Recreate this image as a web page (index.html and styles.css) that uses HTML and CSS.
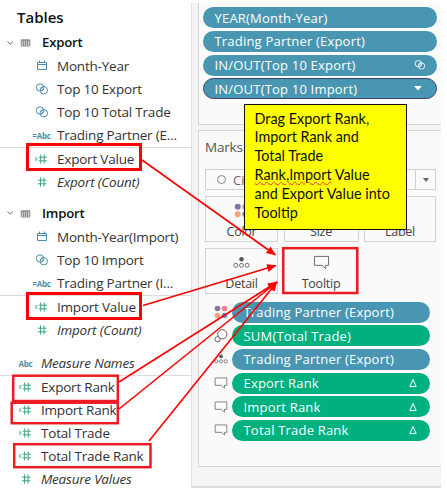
FILE: index.html
```html
<!DOCTYPE html>
<html lang="en">
<head>
<meta charset="utf-8">
<title>Tooltip fields</title>
<link rel="stylesheet" href="styles.css">
</head>
<body>
<svg class="defs" width="0" height="0">
  <symbol id="table" viewBox="0 0 14 14"><path d="M1.5 3.5h11v8h-11zM1.500 6.500h11M1.500 9h11M4.500 5v6.500M7 5v6.500M9.500 5v6.500"/><path d="M1.500 4.500h11"/></symbol>
  <symbol id="chev" viewBox="0 0 8 8"><path d="M1.5 2.5l2.7 2.7 2.7-2.7"/></symbol>
  <symbol id="cal" viewBox="0 0 14 14"><path d="M2.5 3.5h9v7h-9zM2.5 5.5h9M4.5 1.5v2M9.5 1.5v2"/></symbol>
  <symbol id="set" viewBox="0 0 14 14"><circle cx="5" cy="5.5" r="3.7"/><circle cx="8.8" cy="8.2" r="3.7"/><path d="M5.5 7l3-3M6.5 9l2.5-3"/></symbol>
  <symbol id="hash" viewBox="0 0 14 14"><path d="M5.5 2.5v9M9 2.5v9M3 5.2h8.5M3 8.8h8.5"/></symbol>
  <symbol id="ehash" viewBox="0 0 14 14"><path d="M5.7 2.5v9M9.2 2.5v9M3.8 5.2h8.2M3.8 8.8h8.2M0 6h2.3M0 8h2.3"/></symbol>
  <symbol id="dots" viewBox="0 0 14 14"><g stroke="none"><circle cx="3.5" cy="3.5" r="2.8" fill="#8674a2"/><circle cx="10.5" cy="3.5" r="2.8" fill="#f47c86"/><circle cx="3.5" cy="10.5" r="2.8" fill="#f2a477"/><circle cx="10.5" cy="10.5" r="2.8" fill="#5c93c4"/></g></symbol>
  <symbol id="detail" viewBox="0 0 18 14"><circle cx="9" cy="3.5" r="2.4" fill="#555" stroke="none"/><circle cx="3" cy="10" r="2.1"/><circle cx="9" cy="10" r="2.1"/><circle cx="15" cy="10" r="2.1"/></symbol>
  <symbol id="size" viewBox="0 0 14 14"><circle cx="8.3" cy="5.3" r="4.6"/><circle cx="3.5" cy="10.3" r="2.6" fill="#fafafa"/></symbol>
  <symbol id="tip" viewBox="0 0 18 16"><path d="M1.500 1.5h15v9.500h-3v3.5l-4-3.500h-8z"/></symbol>
  <symbol id="delta" viewBox="0 0 10 10"><path d="M5 1.5L8.2 8.6H1.8z"/></symbol>
</svg>

<main class="app">
  <section class="data">
    <h1>Tables</h1>
    <div class="row group"><svg class="chev"><use href="#chev"/></svg><svg class="tbl"><use href="#table"/></svg><b>Export</b></div>
    <div class="row child"><i class="ic dim"><svg><use href="#cal"/></svg></i><span>Month-Year</span></div>
    <div class="row child"><i class="ic dim"><svg><use href="#set"/></svg></i><span>Top 10 Export</span></div>
    <div class="row child"><i class="ic dim"><svg><use href="#set"/></svg></i><span>Top 10 Total Trade</span></div>
    <div class="row child last"><i class="ic abc">=Abc</i><span>Trading Partner (E...</span></div>
    <div class="row child"><i class="ic mea"><svg><use href="#ehash"/></svg></i><span>Export Value</span></div>
    <div class="row child"><i class="ic mea"><svg><use href="#hash"/></svg></i><em>Export (Count)</em></div>
    <div class="row group second"><svg class="chev"><use href="#chev"/></svg><svg class="tbl"><use href="#table"/></svg><b>Import</b></div>
    <div class="row child"><i class="ic dim"><svg><use href="#cal"/></svg></i><span>Month-Year(Import)</span></div>
    <div class="row child"><i class="ic dim"><svg><use href="#set"/></svg></i><span>Top 10 Import</span></div>
    <div class="row child last"><i class="ic abc">=Abc</i><span>Trading Partner (I...</span></div>
    <div class="row child"><i class="ic mea"><svg><use href="#ehash"/></svg></i><span>Import Value</span></div>
    <div class="row child"><i class="ic mea"><svg><use href="#hash"/></svg></i><em>Import (Count)</em></div>
    <div class="row root names last"><i class="ic abc">Abc</i><em>Measure Names</em></div>
    <div class="row root"><i class="ic mea"><svg><use href="#ehash"/></svg></i><span>Export Rank</span></div>
    <div class="row root"><i class="ic mea"><svg><use href="#ehash"/></svg></i><span>Import Rank</span></div>
    <div class="row root"><i class="ic mea"><svg><use href="#ehash"/></svg></i><span>Total Trade</span></div>
    <div class="row root"><i class="ic mea"><svg><use href="#ehash"/></svg></i><span>Total Trade Rank</span></div>
    <div class="row root"><i class="ic mea"><svg><use href="#hash"/></svg></i><em>Measure Values</em></div>
  </section>

  <section class="shelves">
    <div class="card filters">
      <div class="pill">YEAR(Month-Year)</div>
      <div class="pill">Trading Partner (Export)</div>
      <div class="pill">IN/OUT(Top 10 Export)<svg class="pset"><use href="#set"/></svg></div>
      <div class="pill active">IN/OUT(Top 10 Import)<svg class="caret" viewBox="0 0 8 5"><path d="M0 0h8L4 4.5z"/></svg></div>
    </div>
    <div class="card marks">
      <h2>Marks</h2>
      <div class="select"><span class="circle"></span><span class="kind">Ci</span><span class="arrow"><svg viewBox="0 0 6 4"><path d="M0 0h6L3 4z"/></svg></span></div>
      <div class="buttons">
        <div class="btn"><svg class="bi"><use href="#dots"/></svg><span>Color</span></div>
        <div class="btn"><svg class="bi"><use href="#size"/></svg><span>Size</span></div>
        <div class="btn"><svg class="bi"></svg><span>Label</span></div>
        <div class="btn"><svg class="bi"><use href="#detail"/></svg><span>Detail</span></div>
        <div class="btn"><svg class="bi"><use href="#tip"/></svg><span>Tooltip</span></div>
      </div>
      <div class="enc">
        <div class="line"><svg><use href="#dots"/></svg><div class="pill">Trading Partner (Export)</div></div>
        <div class="line"><svg><use href="#size"/></svg><div class="pill green">SUM(Total Trade)</div></div>
        <div class="line"><svg><use href="#detail"/></svg><div class="pill">Trading Partner (Export)</div></div>
        <div class="line"><svg><use href="#tip"/></svg><div class="pill green">Export Rank<svg class="delta"><use href="#delta"/></svg></div></div>
        <div class="line"><svg><use href="#tip"/></svg><div class="pill green">Import Rank<svg class="delta"><use href="#delta"/></svg></div></div>
        <div class="line"><svg><use href="#tip"/></svg><div class="pill green">Total Trade Rank<svg class="delta"><use href="#delta"/></svg></div></div>
      </div>
    </div>
  </section>

  <div class="note">Drag Export Rank,<br>Import Rank and<br>Total Trade<br><u>Rank,Import</u> Value<br>and Export Value into<br>Tooltip</div>

  <svg class="marksup" viewBox="0 0 447 496">
    <defs><marker id="head" markerUnits="userSpaceOnUse" markerWidth="10" markerHeight="10" refX="9" refY="4" orient="auto"><path d="M0 0L9.5 4L0 8z" fill="#f00" stroke="none"/></marker></defs>
    <g class="bold"><rect x="27.5" y="144.5" width="113" height="25"/><rect x="27.5" y="293.5" width="113" height="25"/></g>
    <g class="thin"><rect x="13.2" y="375.7" width="104.6" height="25.3"/><rect x="11.7" y="402.7" width="106.1" height="20.5"/><rect x="14.2" y="444.2" width="136.3" height="23"/><rect x="283.2" y="248.2" width="74" height="44.8"/></g>
    <g class="arrows"><path d="M142 160L275.500 255"/><path d="M143 305.500L276 265.500"/><path d="M119 382L277 282"/><path d="M119 409L277 282"/><path d="M149 441L277 282"/></g>
  </svg>
</main>
</body>
</html>
```
FILE: styles.css
```css
* { box-sizing: border-box; }
body { margin: 0; background: #fff; font-family: "Open Sans", "Noto Sans", sans-serif; color: #333; }
.defs { position: absolute; }
svg { fill: none; stroke: currentColor; stroke-width: 1; flex: none; }
.app { position: relative; display: flex; width: 447px; height: 496px; overflow: hidden; }

.data { width: 191px; padding-top: 6px; white-space: nowrap; font-size: 13.5px; letter-spacing: -0.21px; }
h1 { margin: 0 0 3px 17px; font-size: 15px; line-height: 22px; font-weight: 600; letter-spacing: 0; color: #111; }
.row { display: flex; align-items: center; height: 23px; line-height: 23px; border-bottom: 1px solid transparent; }
.row.last { border-bottom-color: #ddd; height: 24px; }
.group { padding-left: 6px; height: 24px; }
.group b { margin-left: 11px; font-size: 13.2px; font-weight: 600; color: #111; }
.second { margin-top: 7px; height: 25px; }
.chev { width: 8px; height: 8px; color: #666; }
.tbl { width: 11px; height: 11px; margin-left: 6px; color: #777; }
.child { padding-left: 26px; }
.root { padding-left: 10px; }
.names { margin-top: 9px; }
.names.last { height: 25px; }
.ic { display: flex; justify-content: center; width: 31px; font-style: normal; }
.ic svg { width: 14px; height: 14px; }
.dim { color: #4a8fad; }
.mea { color: #3fa37e; }
.abc { font-size: 8px; font-weight: 700; color: #4a8fad; }

.shelves { width: 250px; height: 485px; margin-top: 3px; padding-left: 6px; background: #f4f4f4; border-left: 1px solid #e0e0e0; border-bottom: 2px solid #ddd; }
.card { background: #fafafa; border: 1px solid #d4d4d4; border-right: 0; }
.filters { display: flex; flex-direction: column; gap: 2.8px; height: 122px; padding: 4px 4px; border-top: 0; }
.pill { display: flex; align-items: center; justify-content: space-between; height: 21px; padding: 0 12px 0 11.5px; border-radius: 11px; background: #4996b2; color: #fff; font-size: 13px; font-weight: 500; letter-spacing: 0.2px; white-space: nowrap; }
.pill.green { background: #00b180; }
.pill.active { border: 1px solid #3a4468; padding: 0 11px 0 10.5px; }
.pset { width: 12px; height: 12px; margin-right: -1px; }
.caret { width: 8px; height: 5px; margin-right: 3px; fill: #fff; stroke: none; }
.marks { height: 337px; margin-top: 5px; padding: 5px 6px; }
h2 { margin: 0; font-size: 13.5px; line-height: 22px; font-weight: 400; letter-spacing: -0.2px; color: #555; }
.select { display: flex; align-items: center; width: 231px; height: 21px; margin-top: 11px; border: 1px solid #d0d0d0; font-size: 13px; color: #666; }
.circle { width: 9px; height: 9px; margin: 0 7px 0 11px; border: 1px solid #888; border-radius: 50%; }
.arrow { display: flex; align-items: center; justify-content: center; width: 20px; height: 19px; margin-left: auto; border-left: 1px solid #d0d0d0; }
.arrow svg { width: 6px; height: 4px; fill: #666; stroke: none; }
.buttons { display: grid; grid-template-columns: 73px 75px 72px; grid-template-rows: 46px 46px; gap: 6px 5.500px; margin-top: 6px; }
.btn { display: flex; flex-direction: column; align-items: center; border: 1px solid #d4d4d4; padding-top: 6px; font-size: 12.500px; line-height: 20px; letter-spacing: -0.25px; color: #444; }
.bi { width: 17px; height: 15px; margin-bottom: 4px; color: #666; }
.enc { display: flex; flex-direction: column; gap: 2.7px; margin-top: 7.5px; }
.line { display: flex; align-items: center; }
.line > svg { width: 14px; height: 14px; margin: 0 4px 0 9px; color: #666; }
.line .pill { width: 198px; }
.delta { width: 10px; height: 10px; }

.note { position: absolute; left: 244px; top: 104px; width: 163px; height: 126px; padding: 4.5px 9.500px; background: #ff0; border: 1px solid #111; font-family: Lato, sans-serif; font-size: 14.4px; line-height: 18.850px; color: #111; white-space: nowrap; }
.note u { text-decoration: underline wavy #e33 1px; text-underline-offset: 1px; }
.marksup { position: absolute; left: 0; top: 0; width: 447px; height: 496px; }
.bold { stroke: #f00; stroke-width: 3; }
.thin { stroke: #ed1c24; stroke-width: 2.5; }
.arrows { stroke: #f00; stroke-width: 1.6; }
.arrows path { marker-end: url(#head); }
.arrows > path { fill: none; }
```
